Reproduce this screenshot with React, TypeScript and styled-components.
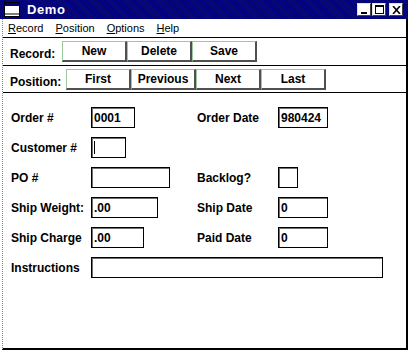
import styled, { createGlobalStyle } from 'styled-components';

const GlobalStyle = createGlobalStyle`
  html, body {
    margin: 0;
    padding: 0;
    background: #fff;
  }
  body {
    font-family: "Liberation Sans", Arial, sans-serif;
    color: #000;
  }
`;

const Window = styled.div`
  width: 408px;
  height: 350px;
  display: flex;
  flex-direction: column;
  background: #fff;
`;

const TitleBar = styled.div`
  height: 19px;
  display: flex;
  align-items: center;
  padding: 0 4px;
  background: #00007b repeating-linear-gradient(45deg, #000084 0 1px, #0a0a70 1px 2px);
  color: #fff;
`;

const Title = styled.span`
  font-weight: bold;
  font-size: 13px;
  margin-left: 7px;
  letter-spacing: 0.6px;
  flex: 1;
`;

const WinButtons = styled.div`
  display: flex;
  gap: 1px;
  margin-right: 1px;
`;

const WinButton = styled.div<{ $gap?: boolean }>`
  width: 12px;
  height: 11px;
  background: #fff;
  border-top: 1px solid #e0e0e0;
  border-left: 1px solid #e0e0e0;
  border-right: 1px solid #404040;
  border-bottom: 1px solid #404040;
  display: flex;
  align-items: center;
  justify-content: center;
  margin-left: ${(p) => (p.$gap ? '2px' : '0')};
`;

const Body = styled.div`
  flex: 1;
  margin-left: 2px;
  border-left: 1px dotted #7a7ad8;
  border-right: 2px solid #000;
  border-bottom: 2px solid #000;
  display: flex;
  flex-direction: column;
`;

const MenuBar = styled.div`
  height: 18px;
  display: flex;
  align-items: center;
  gap: 12px;
  padding-left: 5px;
  font-size: 11px;
  border-bottom: 1px solid #000;
`;

const MenuItem = styled.span`
  u {
    text-decoration: underline;
  }
`;

const Toolbar = styled.div<{ $h: number }>`
  height: ${(p) => p.$h}px;
  display: flex;
  align-items: center;
  padding-left: 7px;
  border-bottom: 1px solid #000;
`;

const ToolLabel = styled.span<{ $w: number }>`
  width: ${(p) => p.$w}px;
  font-weight: bold;
  font-size: 12px;
  padding-top: 5px;
`;

const ToolButton = styled.button`
  width: 65px;
  height: 21px;
  padding: 0;
  background: #fff;
  border-top: 1px solid #9cc89c;
  border-left: 1px solid #9cc89c;
  border-right: 2px solid #505050;
  border-bottom: 2px solid #505050;
  border-radius: 0;
  font-family: "Liberation Sans", Arial, sans-serif;
  font-weight: bold;
  font-size: 12px;
  color: #000;
`;

const Form = styled.div`
  display: grid;
  grid-template-columns: 80px 106px 81px auto;
  grid-auto-rows: 21px;
  row-gap: 9px;
  padding: 14px 0 0 8px;
  align-items: center;
`;

const Label = styled.span`
  font-weight: bold;
  font-size: 12px;
`;

const Field = styled.div<{ $w: number }>`
  width: ${(p) => p.$w}px;
  height: 21px;
  box-sizing: border-box;
  border: 1px solid #000;
  box-shadow: inset 1px 1px 0 #707070;
  display: flex;
  align-items: center;
  padding-left: 2px;
  font-weight: bold;
  font-size: 12px;
`;

const WideField = styled(Field)`
  grid-column: 2 / 5;
`;

const Caret = styled.span`
  width: 1px;
  height: 13px;
  background: #000;
`;

const AppIcon = () => (
  <svg width="16" height="15" viewBox="0 0 16 15">
    <rect x="0.5" y="0.5" width="15" height="14" fill="#fff" stroke="#000" />
    <rect x="1" y="1" width="14" height="3" fill="#000080" />
    <rect x="1" y="11" width="14" height="2" fill="#808080" />
  </svg>
);

export default function App() {
  return (
    <>
      <GlobalStyle />
      <Window>
        <TitleBar>
          <AppIcon />
          <Title>Demo</Title>
          <WinButtons>
            <WinButton>
              <svg width="9" height="8" viewBox="0 0 9 8">
                <rect x="1" y="6" width="6" height="2" fill="#000" />
              </svg>
            </WinButton>
            <WinButton>
              <svg width="9" height="9" viewBox="0 0 9 9">
                <rect x="0.5" y="0.5" width="8" height="8" fill="none" stroke="#000" />
                <rect x="0" y="0" width="9" height="2" fill="#000" />
              </svg>
            </WinButton>
            <WinButton $gap>
              <svg width="9" height="8" viewBox="0 0 9 8">
                <path d="M1 0 L8 8 M8 0 L1 8" stroke="#000" strokeWidth="1.6" />
              </svg>
            </WinButton>
          </WinButtons>
        </TitleBar>
        <Body>
          <MenuBar>
            <MenuItem><u>R</u>ecord</MenuItem>
            <MenuItem><u>P</u>osition</MenuItem>
            <MenuItem><u>O</u>ptions</MenuItem>
            <MenuItem><u>H</u>elp</MenuItem>
          </MenuBar>
          <Toolbar $h={27}>
            <ToolLabel $w={52}>Record:</ToolLabel>
            <ToolButton>New</ToolButton>
            <ToolButton>Delete</ToolButton>
            <ToolButton>Save</ToolButton>
          </Toolbar>
          <Toolbar $h={26}>
            <ToolLabel $w={56}>Position:</ToolLabel>
            <ToolButton>First</ToolButton>
            <ToolButton>Previous</ToolButton>
            <ToolButton>Next</ToolButton>
            <ToolButton>Last</ToolButton>
          </Toolbar>
          <Form>
            <Label>Order #</Label>
            <Field $w={44}>0001</Field>
            <Label>Order Date</Label>
            <Field $w={50}>980424</Field>

            <Label>Customer #</Label>
            <Field $w={35}><Caret /></Field>
            <span />
            <span />

            <Label>PO #</Label>
            <Field $w={79} />
            <Label>Backlog?</Label>
            <Field $w={20} />

            <Label>Ship Weight:</Label>
            <Field $w={67}>.00</Field>
            <Label>Ship Date</Label>
            <Field $w={50}>0</Field>

            <Label>Ship Charge</Label>
            <Field $w={53}>.00</Field>
            <Label>Paid Date</Label>
            <Field $w={50}>0</Field>

            <Label>Instructions</Label>
            <WideField $w={292} />
          </Form>
        </Body>
      </Window>
    </>
  );
}
